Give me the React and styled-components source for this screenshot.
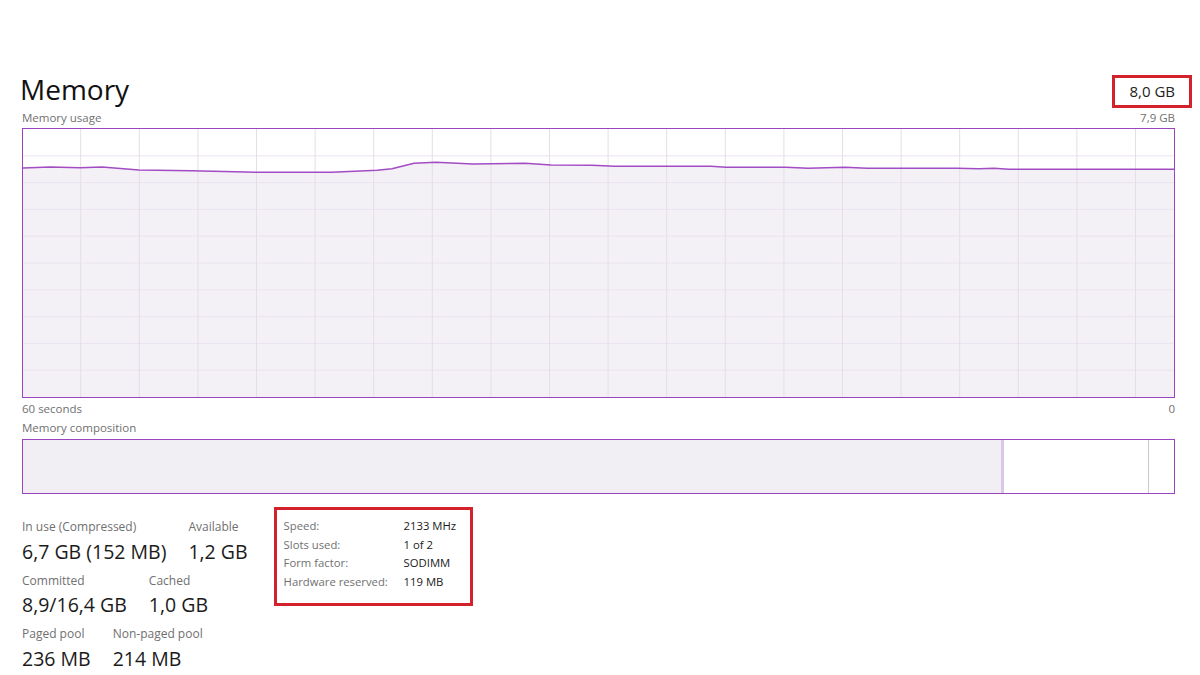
import React from 'react'
import styled, { createGlobalStyle } from 'styled-components'

const GlobalStyle = createGlobalStyle`
  body {
    margin: 0;
    background: #ffffff;
    font-family: "Open Sans", "Noto Sans", sans-serif;
    color: #1b1b1b;
  }
`

// chart points, in px inside the graph frame
const usage = [
  [0, 39], [27, 38], [57, 38.7], [79, 38], [116, 41], [168, 41.7], [235, 43.3],
  [309, 43.3], [354, 41.3], [369, 39.7], [391, 34.3], [413, 33.3], [450, 35],
  [502, 34.3], [528, 36], [569, 36.3], [592, 37.3], [688, 37.3], [703, 38.3],
  [763, 38.3], [785, 39.3], [822, 38.3], [844, 39.3], [934, 39.3], [956, 39.7],
  [971, 39.3], [986, 40.3], [1151, 40.3],
]

const CHART_W = 1151
const CHART_H = 268

const specs = [
  ['Speed:', '2133 MHz'],
  ['Slots used:', '1 of 2'],
  ['Form factor:', 'SODIMM'],
  ['Hardware reserved:', '119 MB'],
]

const stats = [
  [['In use (Compressed)', '6,7 GB (152 MB)'], ['Available', '1,2 GB']],
  [['Committed', '8,9/16,4 GB'], ['Cached', '1,0 GB']],
  [['Paged pool', '236 MB'], ['Non-paged pool', '214 MB']],
]

function UsageGraph() {
  const cols = []
  for (let k = 0; k < 19; k++) cols.push(57.7 + 58.6 * k)
  const rows = []
  for (let k = 1; k < 10; k++) rows.push(26.8 * k)
  const line = usage.map(([x, y], i) => (i ? 'L' : 'M') + x + ' ' + y).join(' ')
  const area = line + ` L${CHART_W} ${CHART_H} L0 ${CHART_H} Z`
  return (
    <svg width={CHART_W} height={CHART_H} viewBox={`0 0 ${CHART_W} ${CHART_H}`} style={{ display: 'block' }}>
      <path d={area} fill="#f4f1f6" />
      {rows.map(y => <line key={'r' + y} x1="0" x2={CHART_W} y1={y} y2={y} stroke="#ebe3ef" strokeWidth="1" />)}
      {cols.map(x => <line key={'c' + x} x1={x} x2={x} y1="0" y2={CHART_H} stroke="#e6dde9" strokeWidth="1" />)}
      <path d={line} fill="none" stroke="#a24cc4" strokeWidth="1.4" />
    </svg>
  )
}

class App extends React.Component {
  render() {
    return (
      <Page>
        <GlobalStyle />
        <Header>
          <Title>Memory</Title>
          <Total>8,0 GB</Total>
        </Header>
        <Caption>
          <span>Memory usage</span>
          <span>7,9 GB</span>
        </Caption>
        <Graph>
          <UsageGraph />
        </Graph>
        <Caption tight>
          <span>60 seconds</span>
          <span>0</span>
        </Caption>
        <Caption tight>
          <span>Memory composition</span>
        </Caption>
        <Composition>
          <Segment width={978} fill="#f2eff4" />
          <Segment width={3} fill="#dac8e6" />
          <Segment width={144} fill="#ffffff" />
          <Segment width={1} fill="#c9c9c9" />
          <Segment grow fill="#ffffff" />
        </Composition>
        <Bottom>
          <StatList>
            {stats.map((row, i) => (
              <StatRow key={i}>
                {row.map(([label, value]) => (
                  <Stat key={label}>
                    <StatLabel>{label}</StatLabel>
                    <StatValue>{value}</StatValue>
                  </Stat>
                ))}
              </StatRow>
            ))}
          </StatList>
          <SpecBox>
            {specs.map(([k, v]) => (
              <React.Fragment key={k}>
                <SpecKey>{k}</SpecKey>
                <SpecValue>{v}</SpecValue>
              </React.Fragment>
            ))}
          </SpecBox>
        </Bottom>
      </Page>
    )
  }
}

const Page = styled.div`
  width: 1153px;
  padding: 72px 0 0 22px;
`

const Header = styled.div`
  display: flex;
  justify-content: space-between;
  align-items: flex-start;
  height: 34px;
`

const Title = styled.h1`
  margin: 0 0 0 -2px;
  font-size: 28px;
  line-height: 34px;
  font-weight: 400;
  color: #111;
`

const Total = styled.div`
  margin: 3px -17px 0 0;
  padding: 0 14px;
  height: 27px;
  border: 3px solid #d3222c;
  font-size: 15px;
  line-height: 27px;
  color: #222;
`

const Caption = styled.div`
  display: flex;
  justify-content: space-between;
  margin-top: ${p => (p.tight ? '3px' : '4px')};
  font-size: 11.5px;
  line-height: 16px;
  color: #707070;
`

const Graph = styled.div`
  margin-top: 2px;
  border: 1px solid #9c44bf;
  background: #fff;
`

const Composition = styled.div`
  display: flex;
  margin-top: 3px;
  height: 53px;
  border: 1px solid #9c44bf;
`

const Segment = styled.div`
  flex: ${p => (p.grow ? '1 1 auto' : `0 0 ${p.width}px`)};
  background: ${p => p.fill};
`

const Bottom = styled.div`
  display: flex;
  align-items: flex-start;
  margin-top: 13px;
`

const StatList = styled.div`
  display: flex;
  flex-direction: column;
  gap: 6px;
  padding-top: 11px;
`

const StatRow = styled.div`
  display: flex;
  gap: 22px;
`

const Stat = styled.div`
  display: flex;
  flex-direction: column;
`

const StatLabel = styled.div`
  font-size: 12px;
  line-height: 18px;
  color: #707070;
`

const StatValue = styled.div`
  margin-top: 1.5px;
  font-size: 19.5px;
  line-height: 28px;
  color: #1b1b1b;
`

const SpecBox = styled.div`
  display: grid;
  grid-template-columns: 120px auto;
  margin-left: 26px;
  padding: 7px 14px 11px 7px;
  border: 3px solid #d3222c;
  font-size: 11.3px;
  line-height: 18.7px;
`

const SpecKey = styled.div`
  color: #707070;
`

const SpecValue = styled.div`
  color: #1b1b1b;
`

export default App
